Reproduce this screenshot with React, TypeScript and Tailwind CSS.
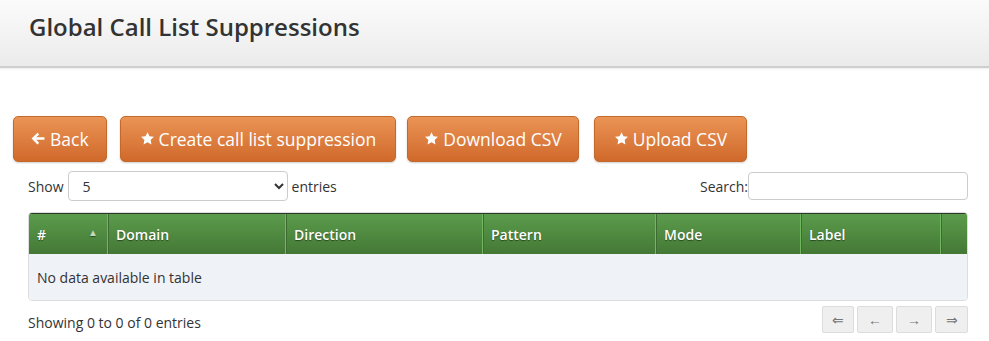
import { useState } from "react";

const columns = [
    { label: "#", w: "w-[78px]", sort: true },
    { label: "Domain", w: "w-[178px]" },
    { label: "Direction", w: "w-[197px]" },
    { label: "Pattern", w: "w-[173px]" },
    { label: "Mode", w: "w-[145px]" },
    { label: "Label", w: "w-[140px]" },
    { label: "", w: "flex-1" },
];

const pages = [
    { a: "⇐", w: "w-[32px]" },
    { a: "←", w: "w-[36px]" },
    { a: "→", w: "w-[36px]" },
    { a: "⇒", w: "w-[33px]" },
];

function Star() {
    return (
        <svg viewBox="0 0 24 24" className="w-[15px] h-[15px] fill-white mr-[4px] -mt-[2px]">
            <path d="M12 1.8l3.1 6.6 7.2.9-5.3 5 1.4 7.1L12 17.9l-6.4 3.5 1.4-7.1-5.3-5 7.2-.9z" />
        </svg>
    );
}

function Arrow() {
    return (
        <svg viewBox="0 0 24 24" className="w-[15px] h-[15px] fill-white mr-[4px] -mt-[1px]">
            <path d="M10.3 2.6l2.8 2.8-4.7 4.6H21.5v4H8.4l4.7 4.6-2.8 2.8L.9 12z" />
        </svg>
    );
}

function OrangeButton({ children, className = "" }: { children: React.ReactNode; className?: string }) {
    return (
        <button
            className={`flex items-center h-[46px] rounded-[5px] border border-[#c3692b] bg-gradient-to-b from-[#ea9455] to-[#d0692a] text-white text-[17.5px] shadow-[0_1px_2px_rgba(0,0,0,0.2)] ${className}`}>
            {children}
        </button>
    );
}

export default function App() {
    const [search, setSearch] = useState("");
    const [size, setSize] = useState("5");

    return (
        <div className="w-[989px] h-[341px] bg-white overflow-hidden text-[#333] font-['Open_Sans',sans-serif]">
            <div className="h-[68px] bg-gradient-to-b from-[#fbfbfb] to-[#ebebeb] border-b-2 border-[#cfcfcf] shadow-[0_1px_2px_rgba(0,0,0,0.08)] flex items-center px-[29px]">
                <h1 className="text-[24px] font-semibold text-[#333] -mt-[13px]">Global Call List Suppressions</h1>
            </div>

            <div className="flex items-center mt-[48px] pl-[13px]">
                <OrangeButton className="px-[17px]">
                    <Arrow />
                    Back
                </OrangeButton>
                <OrangeButton className="ml-[13px] px-[19px]">
                    <Star />
                    Create call list suppression
                </OrangeButton>
                <OrangeButton className="ml-[11px] px-[16px]">
                    <Star />
                    Download CSV
                </OrangeButton>
                <OrangeButton className="ml-[15px] px-[19px]">
                    <Star />
                    Upload CSV
                </OrangeButton>
            </div>

            <div className="flex items-center justify-between mx-[21px] pl-[7px] mt-[9px] text-[14px]">
                <div className="flex items-center gap-[4px]">
                    <span>Show</span>
                    <select
                        value={size}
                        onChange={(e) => setSize(e.target.value)}
                        className="w-[220px] h-[30px] border border-[#ccc] rounded-[4px] px-[10px] text-[14px] bg-white">
                        <option value="5">5</option>
                        <option value="10">10</option>
                        <option value="25">25</option>
                    </select>
                    <span>entries</span>
                </div>
                <div className="flex items-center">
                    <span>Search:</span>
                    <input
                        value={search}
                        onChange={(e) => setSearch(e.target.value)}
                        className="w-[220px] h-[28px] border border-[#ccc] rounded-[4px] px-[6px] outline-none"
                    />
                </div>
            </div>

            <div className="mx-[28px] mt-[11px] w-[940px] border border-[#ddd] rounded-[4px] overflow-hidden">
                <div className="flex h-[41px] bg-gradient-to-b from-[#5b9c4c] to-[#447835] border-t border-[#2d3a2a] text-white text-[14px] font-semibold [text-shadow:0_1px_1px_rgba(0,0,0,0.45)]">
                    {columns.map((c, i) => (
                        <div
                            key={i}
                            className={`${c.w} flex items-center justify-between px-[8px] ${i > 0 ? "border-l border-l-[#72b861] shadow-[inset_1px_0_0_#3d6b31]" : ""}`}>
                            <span>{c.label}</span>
                            {c.sort ? <span className="text-[10px] text-[#c2dbba] mr-[1px] -mt-[3px]">▲</span> : null}
                        </div>
                    ))}
                </div>
                <div className="h-[46px] bg-[#eff2f7] flex items-center px-[8px] text-[14px]">No data available in table</div>
            </div>

            <div className="flex items-center justify-between mx-[21px] pl-[7px] mt-[5px] text-[14px]">
                <span className="mt-[6px]">Showing 0 to 0 of 0 entries</span>
                <div className="flex gap-[3px]">
                    {pages.map((p) => (
                        <button
                            key={p.a}
                            className={`${p.w} h-[27px] bg-[#efefef] border border-[#dcdcdc] rounded-[2px] text-[#777] text-[14px] flex items-center justify-center`}>
                            {p.a}
                        </button>
                    ))}
                </div>
            </div>
        </div>
    );
}
